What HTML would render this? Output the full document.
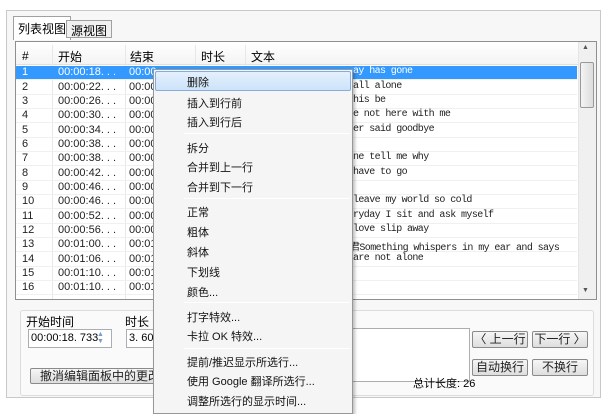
<!DOCTYPE html>
<html><head><meta charset="utf-8"><style>
*{margin:0;padding:0;box-sizing:border-box}
body{width:608px;height:410px;background:#fff;position:relative;overflow:hidden;font-family:"Liberation Sans","Noto Sans CJK SC",sans-serif;font-size:11px;color:#000}
.a{position:absolute;white-space:nowrap}
.frame{left:6px;top:10px;width:595px;height:388px;border:1px solid #c8c8c8;background:#f7f7f7}
.tab{top:18px;height:20px;border:1px solid #a0a0a0;border-bottom:none;background:#fff;font-size:12px;padding:1px 4px}
.tbl{left:15px;top:41px;width:582px;height:259px;border:1px solid #8e8f8f;background:#fff}
.row{left:16px;height:14px;width:561px;border-bottom:1px solid #f0f0f0;font-size:11px;color:#222}
.row span{position:absolute;top:0px;white-space:nowrap}
.sel{background:#3399ff;color:#fff}
.mono{font-family:"Liberation Mono","Noto Sans CJK SC",monospace;font-size:10px;letter-spacing:-0.6px}
.vl{width:1px;background:#e8e8e8;top:45px;height:254px}
.menu{left:153px;top:69px;width:200px;height:345px;background:#f5f5f5;border:1px solid #979797;box-shadow:2px 2px 3px rgba(0,0,0,.25)}
.mi{left:187px;font-size:11px;color:#111}
.sep{left:184px;width:166px;height:1px;background:#d8d8d8;border-bottom:1px solid #fff}
.btn{border:1px solid #8a8a8a;border-radius:2px;background:linear-gradient(#f6f6f6,#dedede);font-size:12px;text-align:center;line-height:14px;color:#222}
.inp{border:1px solid #abadb3;background:#fff}
</style></head><body>
<div class="a frame"></div>
<div class="a tab" style="left:13px;top:16px;height:24px;padding-top:3px">列表视图</div>
<div class="a tab" style="left:66px;top:20px;height:18px;background:#f0f0f0;border:1px solid #a0a0a0">源视图</div>
<div class="a tbl"></div>
<div class="a" style="left:16px;top:42px;width:562px;height:23px;background:linear-gradient(#fff,#f4f4f4);border-bottom:1px solid #e0e0e0"></div>
<div class="a" style="left:22px;top:49px;font-size:12px">#</div>
<div class="a" style="left:58px;top:48px;font-size:12px">开始</div>
<div class="a" style="left:130px;top:48px;font-size:12px">结束</div>
<div class="a" style="left:201px;top:48px;font-size:12px">时长</div>
<div class="a" style="left:251px;top:48px;font-size:12px">文本</div>
<div class="a vl" style="left:52px"></div><div class="a vl" style="left:125px"></div><div class="a vl" style="left:195px"></div><div class="a vl" style="left:245px"></div>
<div class="a row sel" style="top:66px"><span style="left:6px">1</span><span style="left:42px">00:00:18. . .</span><span style="left:113px">00:00</span><span class="mono" style="left:337px">ay has gone</span></div>
<div class="a row" style="top:81px"><span style="left:6px">2</span><span style="left:42px">00:00:22. . .</span><span style="left:113px">00:00</span><span class="mono" style="left:337px">all alone</span></div>
<div class="a row" style="top:95px"><span style="left:6px">3</span><span style="left:42px">00:00:26. . .</span><span style="left:113px">00:00</span><span class="mono" style="left:337px">his be</span></div>
<div class="a row" style="top:109px"><span style="left:6px">4</span><span style="left:42px">00:00:30. . .</span><span style="left:113px">00:00</span><span class="mono" style="left:337px">e not here with me</span></div>
<div class="a row" style="top:124px"><span style="left:6px">5</span><span style="left:42px">00:00:34. . .</span><span style="left:113px">00:00</span><span class="mono" style="left:337px">er said goodbye</span></div>
<div class="a row" style="top:138px"><span style="left:6px">6</span><span style="left:42px">00:00:38. . .</span><span style="left:113px">00:00</span></div>
<div class="a row" style="top:152px"><span style="left:6px">7</span><span style="left:42px">00:00:38. . .</span><span style="left:113px">00:00</span><span class="mono" style="left:337px">ne tell me why</span></div>
<div class="a row" style="top:167px"><span style="left:6px">8</span><span style="left:42px">00:00:42. . .</span><span style="left:113px">00:00</span><span class="mono" style="left:337px">have to go</span></div>
<div class="a row" style="top:181px"><span style="left:6px">9</span><span style="left:42px">00:00:46. . .</span><span style="left:113px">00:00</span></div>
<div class="a row" style="top:195px"><span style="left:6px">10</span><span style="left:42px">00:00:46. . .</span><span style="left:113px">00:00</span><span class="mono" style="left:337px">leave my world so cold</span></div>
<div class="a row" style="top:210px"><span style="left:6px">11</span><span style="left:42px">00:00:52. . .</span><span style="left:113px">00:00</span><span class="mono" style="left:337px">ryday I sit and ask myself</span></div>
<div class="a row" style="top:224px"><span style="left:6px">12</span><span style="left:42px">00:00:56. . .</span><span style="left:113px">00:00</span><span class="mono" style="left:337px">love slip away</span></div>
<div class="a row" style="top:238px"><span style="left:6px">13</span><span style="left:42px">00:01:00. . .</span><span style="left:113px">00:01</span><span class="mono" style="left:334px">君Something whispers in my ear and says</span></div>
<div class="a row" style="top:253px"><span style="left:6px">14</span><span style="left:42px">00:01:06. . .</span><span style="left:113px">00:01</span><span class="mono" style="left:337px">are not alone</span></div>
<div class="a row" style="top:267px"><span style="left:6px">15</span><span style="left:42px">00:01:10. . .</span><span style="left:113px">00:01</span></div>
<div class="a row" style="top:281px"><span style="left:6px">16</span><span style="left:42px">00:01:10. . .</span><span style="left:113px">00:01</span></div>
<div class="a" style="left:578px;top:42px;width:18px;height:257px;background:#f0f0f0;border-left:1px solid #e5e5e5"></div>
<div class="a" style="left:582px;top:44px;font-size:7px;color:#555">▲</div>
<div class="a" style="left:580px;top:62px;width:14px;height:46px;border:1px solid #999;border-radius:2px;background:linear-gradient(90deg,#f4f4f4,#dcdcdc)"></div>
<div class="a" style="left:582px;top:287px;font-size:7px;color:#555">▼</div>
<!-- bottom panel -->
<div class="a" style="left:20px;top:310px;width:574px;height:86px;border:1px solid #dcdcdc;border-radius:3px;background:#fafafa"></div>
<div class="a" style="left:26px;top:313px;font-size:12px">开始时间</div>
<div class="a" style="left:125px;top:313px;font-size:12px">时长</div>
<div class="a inp" style="left:28px;top:329px;width:84px;height:19px"></div>
<div class="a" style="left:31px;top:332px;font-size:11px">00:00:18. 733</div>
<div class="a" style="left:97px;top:331px;font-size:7px;color:#7a9ccc;line-height:7px">▲<br>▼</div>
<div class="a inp" style="left:126px;top:329px;width:40px;height:19px"></div>
<div class="a" style="left:129px;top:332px;font-size:11px">3. 600</div>
<div class="a inp" style="left:340px;top:328px;width:130px;height:54px"></div>
<div class="a btn" style="left:472px;top:331px;width:56px;height:17px">〈 上一行</div>
<div class="a btn" style="left:532px;top:331px;width:56px;height:17px">下一行 〉</div>
<div class="a btn" style="left:472px;top:359px;width:56px;height:17px">自动换行</div>
<div class="a btn" style="left:532px;top:359px;width:56px;height:17px">不换行</div>
<div class="a" style="left:413px;top:375px;font-size:11px">总计长度: 26</div>
<div class="a btn" style="left:30px;top:368px;width:140px;height:16px">撤消编辑面板中的更改</div>
<!-- menu -->
<div class="a menu"></div>
<div class="a" style="left:155px;top:71px;width:196px;height:20px;background:linear-gradient(#e4f0fc,#cde3fa);border:1px solid #84acdd;border-radius:2px"></div>
<div class="a mi" style="top:74px">删除</div>
<div class="a mi" style="top:95px">插入到行前</div>
<div class="a mi" style="top:114px">插入到行后</div>
<div class="a sep" style="top:133px"></div>
<div class="a mi" style="top:140px">拆分</div>
<div class="a mi" style="top:159px">合并到上一行</div>
<div class="a mi" style="top:179px">合并到下一行</div>
<div class="a sep" style="top:198px"></div>
<div class="a mi" style="top:204px">正常</div>
<div class="a mi" style="top:224px">粗体</div>
<div class="a mi" style="top:244px">斜体</div>
<div class="a mi" style="top:264px">下划线</div>
<div class="a mi" style="top:284px">颜色...</div>
<div class="a sep" style="top:302px"></div>
<div class="a mi" style="top:309px">打字特效...</div>
<div class="a mi" style="top:328px">卡拉 OK 特效...</div>
<div class="a sep" style="top:348px"></div>
<div class="a mi" style="top:354px">提前/推迟显示所选行...</div>
<div class="a mi" style="top:373px">使用 Google 翻译所选行...</div>
<div class="a mi" style="top:393px">调整所选行的显示时间...</div>
</body></html>
